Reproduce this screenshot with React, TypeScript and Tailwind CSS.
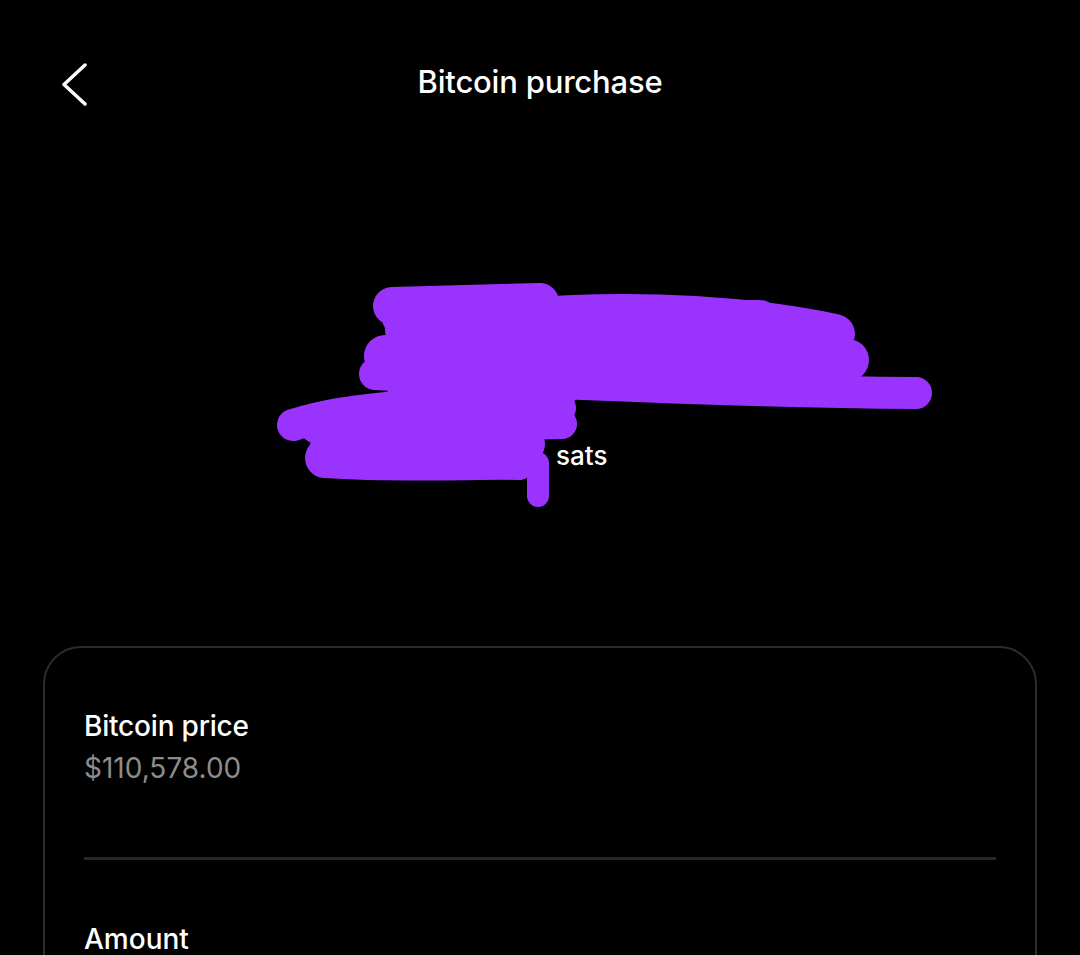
import type { FC } from "react";

// redaction scribble over the amount, drawn in page coordinates
const Scribble: FC = () => (
  <svg
    className="absolute inset-0 h-full w-full"
    viewBox="0 166 1080 480"
    fill="none"
    stroke="#9a33fe"
    strokeLinecap="round"
    strokeLinejoin="round"
  >
    <path d="M392 306 L540 302" strokeWidth="38" />
    <path d="M400 318 L760 318" strokeWidth="36" />
    <path d="M405 330 C550 310 700 306 835 334" strokeWidth="40" />
    <path d="M385 356 L848 360" strokeWidth="42" />
    <path d="M375 374 C600 386 800 392 916 393" strokeWidth="32" />
    <path d="M560 345 L760 352" strokeWidth="60" />
    <path d="M400 395 L565 392" strokeWidth="26" />
    <path d="M293 425 C350 406 450 400 560 408" strokeWidth="32" />
    <path d="M315 428 L562 424" strokeWidth="30" />
    <path d="M330 446 L525 444" strokeWidth="40" />
    <path d="M325 458 C400 463 480 459 518 460" strokeWidth="40" />
    <path d="M538 463 L538 496" strokeWidth="22" />
    <path d="M520 462 L520 470" strokeWidth="20" />
  </svg>
);

const App: FC = () => {
  return (
    <div
      className="h-[955px] overflow-hidden bg-black text-white"
      style={{ fontFamily: "Inter, 'Liberation Sans', sans-serif" }}
    >
      <header className="h-[166px] pt-[62px]">
        <div className="grid grid-cols-[1fr_auto_1fr]">
          <div className="pl-[58px]">
            <svg width="32" height="44" viewBox="0 0 32 44" fill="none">
              <path
                d="M27 3 L6 22.5 L27 42"
                stroke="white"
                strokeWidth="3.5"
                strokeLinecap="round"
                strokeLinejoin="round"
              />
            </svg>
          </div>
          <h1 className="text-[31px] font-medium leading-[40px] tracking-[-0.2px]">Bitcoin purchase</h1>
          <div />
        </div>
      </header>

      <section className="relative h-[480px]">
        <div className="flex pt-[275px]">
          <span className="w-[556px]" />
          <span className="text-[26px] font-medium leading-[30px]">sats</span>
        </div>
        <Scribble />
      </section>

      <div className="mx-[43px] rounded-[38px] border-2 border-[#2c2c2c] px-[39px] pt-[61px] pb-10">
        <div className="text-[28px] font-medium leading-[34px] tracking-[-0.2px]">Bitcoin price</div>
        <div className="mt-2 text-[28px] leading-[34px] text-[#8c8c8c]">$110,578.00</div>
        <div className="mt-[72px] h-[3px] bg-[#262626]" />
        <div className="mt-[62px] text-[28px] font-medium leading-[34px]">Amount</div>
        <div className="mt-2 text-[28px] leading-[34px] text-[#8c8c8c]">$50.00</div>
      </div>
    </div>
  );
};

export default App;
